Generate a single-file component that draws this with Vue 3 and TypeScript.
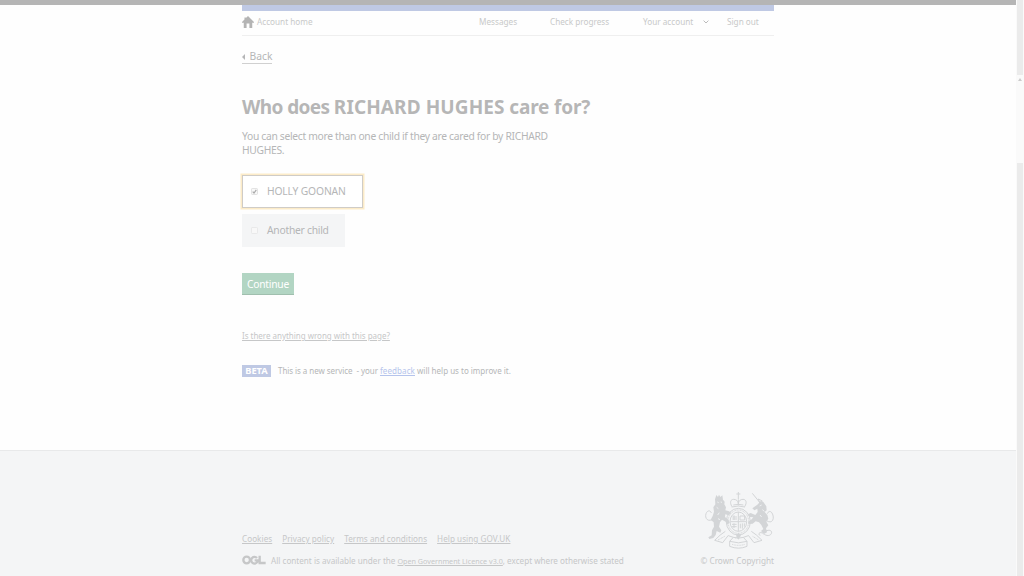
<script setup lang="ts">
import { ref } from 'vue'

interface Child { label: string; checked: boolean }
const children = ref<Child[]>([
  { label: 'HOLLY GOONAN', checked: true },
  { label: 'Another child', checked: false },
])
const footerLinks: string[] = ['Cookies', 'Privacy policy', 'Terms and conditions', 'Help using GOV.UK']
</script>

<template>
  <div class="screen">
    <div class="page">
      <div class="topbar"></div>
      <div class="container">
        <div class="blue"></div>
        <nav class="nav">
          <svg class="home" viewBox="0 0 34 34"><path d="M17 0 34 17v2h-5v15h-8V21h-8v13H5V19H0v-2L7 10V4h4v2z" /></svg>
          <span class="n-home">Account home</span>
          <span class="n-msg">Messages</span>
          <span class="n-check">Check progress</span>
          <span class="n-your">Your account</span>
          <svg class="chev" viewBox="0 0 6 4"><path d="M.6.6 3 3 5.400.6" /></svg>
          <span class="n-out">Sign out</span>
        </nav>
        <a class="back"><svg viewBox="0 0 3 6"><path d="M3 0v6L0 3z" /></svg><span>Back</span></a>
        <h1><span class="h-a">Who does </span><span class="h-b">RICHARD HUGHES</span> care for?</h1>
        <p class="hint"><span>You can select more than one child if they are cared for by RICHARD</span><br />HUGHES.</p>
        <div class="choices">
          <label v-for="c in children" :key="c.label" :class="['choice', { on: c.checked }]">
            <svg class="box" viewBox="0 0 7 7"><rect x=".5" y=".5" width="6" height="6" rx=".8" /><path v-if="c.checked" d="M1.700 3.600 3 5 5.300 1.900" /></svg>
            <span>{{ c.label }}</span>
          </label>
        </div>
        <button class="continue" type="button">Continue</button>
        <a class="wrong">Is there anything wrong with this page?</a>
        <div class="phase">
          <strong>BETA</strong>
          <span class="phase-a">This is a new service&nbsp; - your&nbsp;</span><a>feedback</a><span>&nbsp;will help us to improve it.</span>
        </div>
      </div>
      <footer class="footer">
        <div class="foot-inner">
          <div class="foot-left">
            <div class="links"><a v-for="l in footerLinks" :key="l">{{ l }}</a></div>
            <div class="licence">
              <svg class="ogl" viewBox="0 0 72 28"><circle cx="14" cy="14" r="10" /><path d="M45 8A10 10 0 1 0 46 20V15H38M53 1V23H71" /></svg>
              <span class="lic-a">All content is available under the</span>
              <a>Open Government Licence v3.0</a><span class="lic-b">, except where otherwise stated</span>
            </div>
          </div>
          <div class="foot-right">
            <svg class="crest" viewBox="45 33 210 177">
              <g class="solid">
                <path d="M75 58 79 45 84 51 87 44 91 51 97 46 99 59 104 65 103 73 108 82 106 91 117 94 124 99 116 106 106 103 105 111 115 119 119 128 110 134 107 125 96 119 90 127 87 140 94 151 91 158 80 153 77 165 70 174 58 177 55 172 65 166 66 151 72 140 71 127 62 119 68 108 72 95 70 82 76 73z" />
                <path d="M202 74 213 62 220 66 229 79 230 91 224 96 232 105 235 116 229 125 235 136 228 145 231 157 222 162 213 153 220 147 214 135 207 127 197 124 188 131 177 132 174 126 185 118 190 112 179 111 173 103 182 99 196 105 203 96 202 86 193 91 187 85z" />
              </g>
              <g class="line">
                <path d="M126 80c-8-13-4-22 5-22 8 0 13 5 14 12 1-7 6-12 14-12 9 0 13 9 5 22M145 58v18M130 75q15-4 30 0" />
                <path d="M67 119C48 127 43 108 50 97c5-7 12-5 14 2M228 121c20 14 27-7 18-22-5-8-12-4-14 2M209 67 187 40M210 71l-5-14 12 6M145 36v21M139 42h12M125 81q20-6 40 0M218 157c18-10 30-7 26 4-6 10-19 5-27-2-10-5-14 6-6 7" />
                <ellipse cx="145" cy="125" rx="36" ry="40" />
                <ellipse class="dash" cx="145" cy="125" rx="31" ry="35" />
                <ellipse cx="145" cy="125" rx="25" ry="29" />
                <path d="M145 96v58M121 125h48M127 111h14M127 117h14M132 106v14M150 108h14v12h-14zM126 133h14M126 140h14M132 130v14M151 131v14M157 130v16M163 130v10" />
                <path d="M106 154q-15 9-32 27l24 7 17-22M184 154q15 9 32 27l-24 7-17-22M115 167l15 5-11 12q27 9 52 0l-11-12 15-5M119 184v15q27 11 52 0v-15M130 172q15 5 30 0" />
                <path class="dash" d="M84 180 104 169M188 169l18 11M126 193q20 6 39 0M84 77l10 6M80 89l10 5M78 108l12 4M200 115l16-10M136 174l18-8" />
              </g>
              <g class="cut"><path d="M82 66l4 2M92 66l4 1M80 82l5 4M88 98l-5 7M84 116l6 3M215 75l-6 3M217 89l6 5M210 105l5 6" /></g>
              <path class="solid" d="m145 158 7 9-7 12-7-12z" />
            </svg>
            <span class="copy">© Crown Copyright</span>
          </div>
        </div>
      </footer>
    </div>
    <aside class="scroll">
      <div class="track upper"></div>
      <div class="gap"><svg viewBox="0 0 4 3"><path d="M0 3 2 0l2 3z" /></svg></div>
      <div class="track lower"></div>
    </aside>
  </div>
</template>

<style>
html, body { margin: 0; overflow: hidden; background: #fff; }
</style>

<style scoped>
* { box-sizing: border-box; }
.screen { width: 1024px; height: 576px; display: flex; overflow: hidden; font-family: "Noto Sans", "Open Sans", sans-serif; background: #fefefe; white-space: nowrap; color: #b5b6b7; }
svg { display: block; fill: currentColor; flex: none; }
.page { width: 1016px; height: 576px; display: flex; flex-direction: column; }
.topbar { height: 5px; background: #b5b5b5; flex: none; }
.container { width: 532px; margin-left: 242px; height: 445px; display: flex; flex-direction: column; align-items: flex-start; flex: none; }
.blue { width: 100%; height: 6px; background: #bfc9e4; }
.nav { width: 100%; height: 25px; border-bottom: 1px solid #efefef; display: flex; align-items: center; font-size: 8.200px; line-height: 12px; color: #c8c9c9; padding-bottom: 2px; }
.home { width: 12px; height: 12px; color: #b4b4b4; }
.n-home { margin-left: 3px; width: 222px; }
.n-msg { width: 71px; }
.n-check { width: 93px; }
.n-your { width: 60px; }
.chev { width: 6px; height: 4px; fill: none; stroke: #bbb; stroke-width: 1; }
.n-out { margin-left: 18px; }
.back { margin-top: 14px; height: 14px; border-bottom: 1px solid #d0d0d0; display: flex; align-items: center; font-size: 10.300px; line-height: 13px; }
.back svg { width: 3px; height: 6px; margin-right: 4.500px; }
h1 { margin: 30px 0 0; font-size: 19px; line-height: 26px; font-weight: 700; color: #b6b6b6; letter-spacing: -.18px; }
.h-a { letter-spacing: -.6px; }
.h-b { letter-spacing: .1px; }
.hint { margin: 9px 0 0; font-size: 10.300px; line-height: 14px; letter-spacing: -.31px; }
.choices { margin-top: 18px; display: flex; flex-direction: column; align-items: flex-start; gap: 6px; }
.choice { width: 103px; height: 33px; display: flex; align-items: center; padding-left: 9px; background: #f4f5f6; font-size: 10.300px; letter-spacing: -.25px; }
.choice span { padding-bottom: 2px; }
.choice.on { width: 121px; background: #fff; border: 1px solid #cfccc7; padding-left: 8px; box-shadow: 0 0 0 1.500px #fcebc8; letter-spacing: -.15px; }
.box { width: 7px; height: 7px; margin-right: 9px; fill: #f8f8f8; stroke: #e4e4e4; stroke-width: .7; }
.choice.on .box { stroke: #d8d8d8; }
.choice.on .box path { fill: none; stroke: #aaa; stroke-width: 1.200; }
.continue { margin: 26px 0 0; width: 52px; height: 22px; padding: 1px 0 0; border: 0; border-bottom: 1px solid #a0bfae; background: #b2d5c3; color: #fff; font: 10.300px/20px "Noto Sans", sans-serif; letter-spacing: -.25px; }
.wrong { margin-top: 35px; font-size: 8px; line-height: 12px; text-decoration: underline; color: #c6c7c8; letter-spacing: -.02px; }
.phase { margin-top: 23px; height: 12px; display: flex; align-items: center; font-size: 8px; line-height: 12px; }
.phase strong { width: 29px; text-align: center; background: #bfc9e4; color: #fff; font-size: 9.300px; margin-right: 7px; }
.phase-a { letter-spacing: -.06px; }
.phase a { color: #b5c4ec; text-decoration: underline; letter-spacing: .1px; }
.footer { flex: 1; border-top: 1px solid #e8e9ea; background: #f4f5f6; color: #c6c7c8; }
.foot-inner { width: 532px; margin-left: 242px; display: flex; justify-content: space-between; }
.foot-left { padding-top: 82px; }
.links { display: flex; gap: 10px; font-size: 8.150px; line-height: 12px; letter-spacing: .045px; }
.links a, .licence a { text-decoration: underline; }
.licence { margin-top: 10px; height: 12px; display: flex; align-items: center; font-size: 8.150px; line-height: 12px; }
.licence a { font-size: 7.200px; margin-left: 2px; }
.ogl { width: 24px; height: 10px; fill: none; stroke: currentColor; stroke-width: 7; margin: -2px 5px 0 0; }
.foot-right { padding-top: 40px; width: 75px; display: flex; flex-direction: column; align-items: flex-end; font-size: 8.200px; line-height: 12px; }
.crest { width: 70px; height: 59px; color: #d3d5d7; margin: 0 -1px 5px 0; }
.crest .line { fill: none; stroke: currentColor; stroke-width: 3; }
.crest .dash { stroke-dasharray: 3 2; }
.crest .cut { fill: none; stroke: #f4f5f6; stroke-width: 2.500; }
.scroll { width: 8px; background: #fafafa; display: flex; flex-direction: column; align-items: center; }
.track { width: 6px; background: #ebebeb; }
.upper { height: 75px; }
.gap { height: 88px; padding-top: 3px; }
.gap svg { width: 4px; height: 3px; color: #ccc; }
.lower { flex: 1; }
</style>
